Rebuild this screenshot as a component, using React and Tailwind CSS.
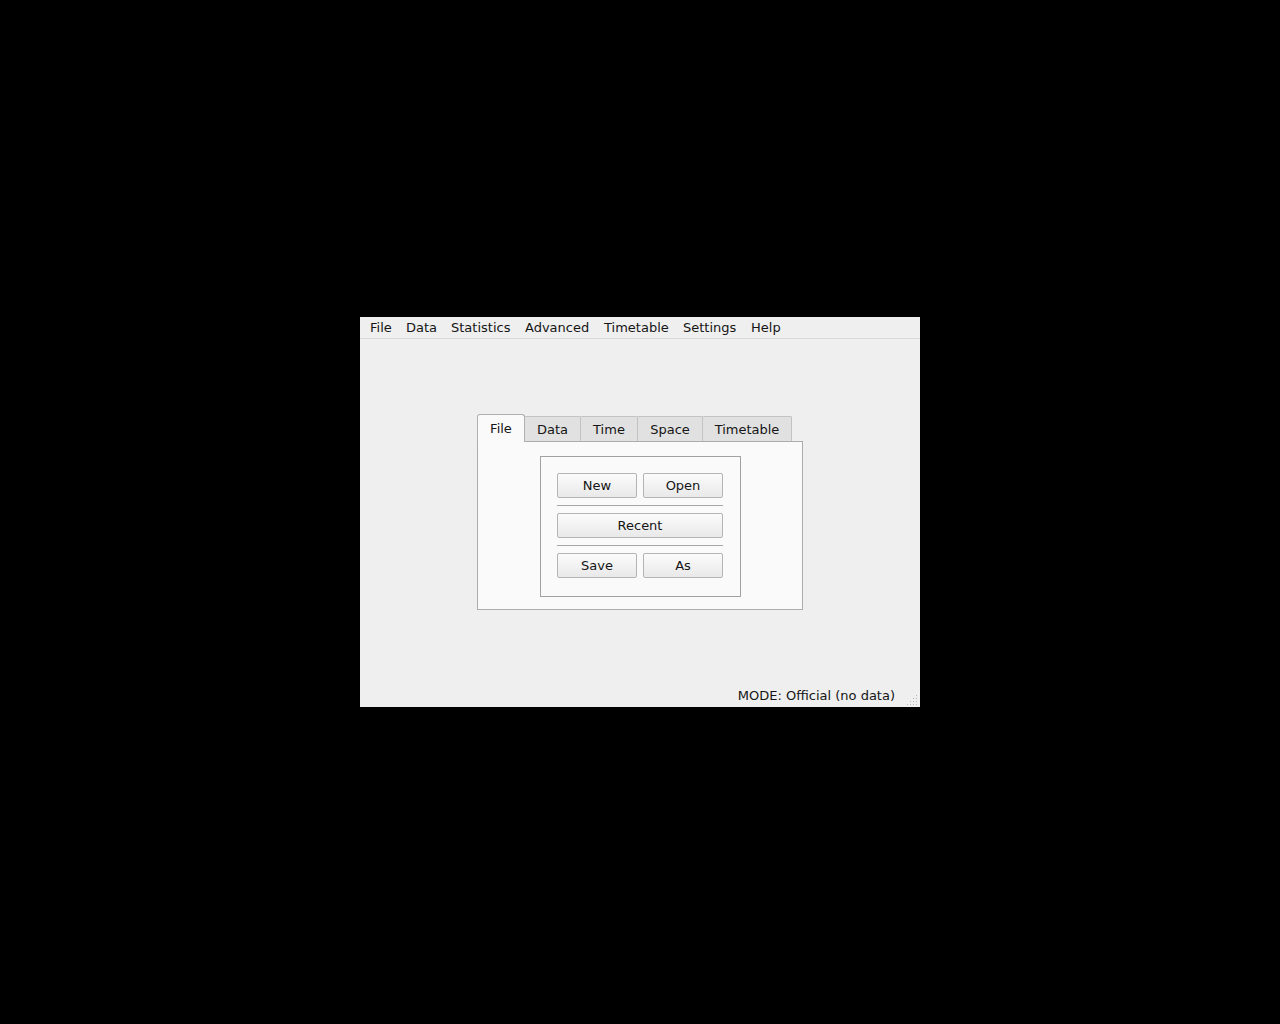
import React, { useState } from 'react'

const menus = [
  { name: 'File', w: 'w-[36px]' },
  { name: 'Data', w: 'w-[45px]' },
  { name: 'Statistics', w: 'w-[74px]' },
  { name: 'Advanced', w: 'w-[79px]' },
  { name: 'Timetable', w: 'w-[79px]' },
  { name: 'Settings', w: 'w-[68px]' },
  { name: 'Help', w: 'w-[40px]' },
]

const tabs = [
  { name: 'File', w: 'w-[48px]' },
  { name: 'Data', w: 'w-[57px]' },
  { name: 'Time', w: 'w-[58px]' },
  { name: 'Space', w: 'w-[66px]' },
  { name: 'Timetable', w: 'w-[90px]' },
]

const Btn = ({ children, className = '' }) => (
  <button className={`h-[25px] rounded-[2px] border border-[#b4b4b4] bg-gradient-to-b from-[#fbfbfb] to-[#e9e9e9] text-[13px] text-[#151515] leading-none ${className}`}>
    {children}
  </button>
)

const SizeGrip = () => (
  <svg width="12" height="12" viewBox="0 0 12 12" className="mb-[1px]">
    {[
      [10, 2], [10, 5], [10, 8], [10, 11],
      [7, 5], [7, 8], [7, 11],
      [4, 8], [4, 11],
      [1, 11],
    ].map(([x, y], i) => (
      <rect key={i} x={x} y={y - 1} width="1" height="1" fill="#b8b8b8" />
    ))}
  </svg>
)

export default function App() {
  const [active, setActive] = useState('File')

  return (
    <div className="h-screen w-full bg-black flex items-center justify-center" style={{ fontFamily: '"DejaVu Sans", sans-serif' }}>
      <div className="w-[560px] h-[390px] bg-[#efefef] flex flex-col text-[13px] text-[#151515]">
        {/* Menu bar */}
        <div className="h-[22px] flex items-center pl-[10px] border-b border-[#dadada] bg-[#efefef]">
          {menus.map((m) => (
            <span key={m.name} className={`${m.w} leading-none`}>{m.name}</span>
          ))}
        </div>

        {/* Central area */}
        <div className="flex-1 flex items-start justify-start pt-[75px] pl-[117px]">
          <div className="flex flex-col">
            <div className="flex items-end h-[27px]">
              {tabs.map((t, i) =>
                t.name === active ? (
                  <div
                    key={t.name}
                    className={`${t.w} ${i > 0 ? '-ml-px' : ''} relative z-10 h-[28px] -mb-px bg-[#fafafa] border border-b-0 border-[#b0b0b0] rounded-t-[3px] flex items-center justify-center`}
                  >
                    {t.name}
                  </div>
                ) : (
                  <div
                    key={t.name}
                    onClick={() => setActive(t.name)}
                    className={`${t.w} ${i > 0 ? '-ml-px' : ''} h-[25px] pt-[2px] bg-[#e1e1e1] border border-b-0 border-[#c3c3c3] rounded-t-[2px] flex items-center justify-center cursor-default`}
                  >
                    {t.name}
                  </div>
                )
              )}
            </div>
            <div className="w-[326px] h-[169px] bg-[#fafafa] border border-[#ababab] flex items-start justify-start pt-[14px] pl-[62px]">
              <div className="w-[201px] h-[141px] border border-[#a2a2a2] pt-[16px] pl-[16px] flex flex-col">
                <div className="flex gap-[6px]">
                  <Btn className="w-[80px]">New</Btn>
                  <Btn className="w-[80px]">Open</Btn>
                </div>
                <div className="w-[166px] border-t border-[#a6a6a6] my-[7px]" />
                <Btn className="w-[166px]">Recent</Btn>
                <div className="w-[166px] border-t border-[#a6a6a6] my-[7px]" />
                <div className="flex gap-[6px]">
                  <Btn className="w-[80px]">Save</Btn>
                  <Btn className="w-[80px]">As</Btn>
                </div>
              </div>
            </div>
          </div>
        </div>

        {/* Status bar */}
        <div className="h-[22px] flex items-end justify-end pr-[2px]">
          <span className="leading-none mb-[5px] mr-[11px]">MODE: Official (no data)</span>
          <SizeGrip />
        </div>
      </div>
    </div>
  )
}
